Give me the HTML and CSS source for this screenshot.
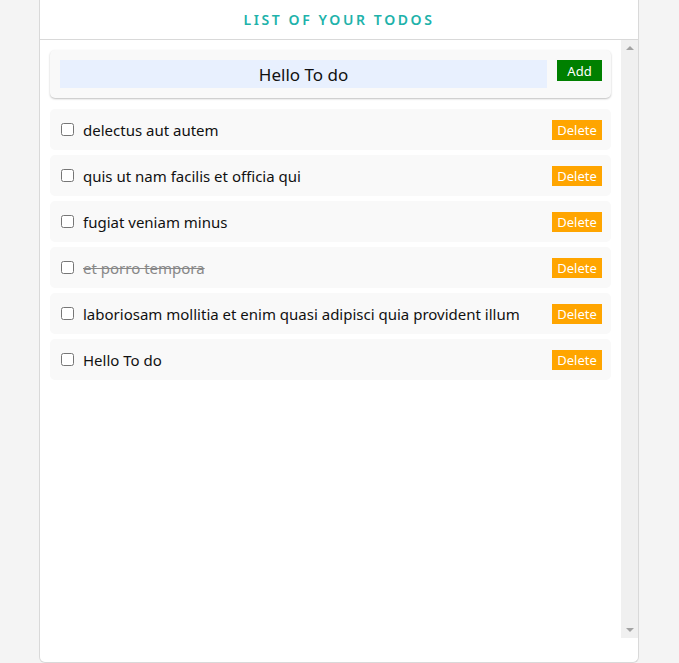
FILE: index.html
```html
<!DOCTYPE html>
<html lang="en">
<head>
<meta charset="utf-8">
<title>Todos</title>
<link rel="stylesheet" href="styles.css">
</head>
<body>
<div class="card">
  <header class="card-header">
    <h1 class="title">LIST OF YOUR TODOS</h1>
  </header>
  <div class="scroll-wrap">
    <div class="scroll">
      <form class="add-form">
        <input class="add-input" type="text" value="Hello To do">
        <button class="btn btn-add" type="button">Add</button>
      </form>
      <ul class="todo-list">
        <li class="todo"><label class="todo-label"><input type="checkbox" class="todo-check"><span class="todo-text">delectus aut autem</span></label><button class="btn btn-delete" type="button">Delete</button></li>
        <li class="todo"><label class="todo-label"><input type="checkbox" class="todo-check"><span class="todo-text">quis ut nam facilis et officia qui</span></label><button class="btn btn-delete" type="button">Delete</button></li>
        <li class="todo"><label class="todo-label"><input type="checkbox" class="todo-check"><span class="todo-text">fugiat veniam minus</span></label><button class="btn btn-delete" type="button">Delete</button></li>
        <li class="todo"><label class="todo-label"><input type="checkbox" class="todo-check"><span class="todo-text done">et porro tempora</span></label><button class="btn btn-delete" type="button">Delete</button></li>
        <li class="todo"><label class="todo-label"><input type="checkbox" class="todo-check"><span class="todo-text">laboriosam mollitia et enim quasi adipisci quia provident illum</span></label><button class="btn btn-delete" type="button">Delete</button></li>
        <li class="todo"><label class="todo-label"><input type="checkbox" class="todo-check"><span class="todo-text">Hello To do</span></label><button class="btn btn-delete" type="button">Delete</button></li>
      </ul>
    </div>
    <div class="scrollbar" aria-hidden="true">
      <span class="arrow arrow-up"></span>
      <span class="arrow arrow-down"></span>
    </div>
  </div>
</div>
</body>
</html>
```
FILE: styles.css
```css
* { box-sizing: border-box; }
html, body { margin: 0; padding: 0; }
body {
  background: #f4f4f4;
  font-family: "Noto Sans", "Open Sans", sans-serif;
  color: #111;
  height: 663px;
  overflow: hidden;
}
.card {
  width: 600px;
  margin-left: 39px;
  height: 663px;
  background: #fff;
  border: 1px solid #d9d9d9;
  border-top: none;
  border-radius: 0 0 6px 6px;
  display: flex;
  flex-direction: column;
  padding-bottom: 24px;
}
.card-header {
  height: 40px;
  flex: none;
  border-bottom: 1px solid #d9d9d9;
  display: flex;
  align-items: center;
  justify-content: center;
}
.title {
  margin: 0;
  font-size: 14px;
  font-weight: 600;
  letter-spacing: 2.6px;
  color: #20b2aa;
}
.scroll-wrap {
  flex: 1;
  display: flex;
  min-height: 0;
}
.scroll {
  flex: 1;
  overflow: hidden;
  padding: 10px;
}
.scrollbar {
  width: 17px;
  flex: none;
  background: #f0f0f0;
  display: flex;
  flex-direction: column;
  justify-content: space-between;
  align-items: center;
  padding: 6px 0;
}
.arrow {
  width: 0;
  height: 0;
  border-left: 4px solid transparent;
  border-right: 4px solid transparent;
}
.arrow-up { border-bottom: 4px solid #a3a3a3; }
.arrow-down { border-top: 4px solid #a3a3a3; }
.add-form {
  display: flex;
  align-items: flex-start;
  gap: 10px;
  padding: 10px 9px 10px 10px;
  background: #f9f9f9;
  border-radius: 5px;
  box-shadow: 0 1px 2px rgba(0,0,0,0.25);
  height: 48px;
  margin: 0;
}
.add-input {
  flex: 1;
  height: 28px;
  border: none;
  background: #e8f0fe;
  font-family: inherit;
  font-size: 17px;
  text-align: center;
  color: #111;
  padding: 0;
  outline: none;
}
.btn {
  border: none;
  color: #fff;
  font-family: inherit;
  font-size: 13px;
  padding: 0;
  cursor: pointer;
}
.btn-add {
  background: #008000;
  width: 45px;
  height: 21px;
}
.todo-list {
  list-style: none;
  margin: 11px 0 0 0;
  padding: 0;
  display: flex;
  flex-direction: column;
  gap: 5px;
}
.todo {
  height: 41px;
  background: #f9f9f9;
  border-radius: 5px;
  display: flex;
  align-items: center;
  justify-content: space-between;
  padding: 0 9px 0 11px;
}
.todo-label {
  display: flex;
  align-items: center;
  gap: 9px;
}
.todo-check {
  margin: 0;
  width: 13px;
  height: 13px;
}
.todo-text {
  font-size: 15px;
}
.todo-text.done {
  text-decoration: line-through;
  color: #888;
}
.btn-delete {
  background: #ffa500;
  width: 50px;
  height: 20px;
}
```
